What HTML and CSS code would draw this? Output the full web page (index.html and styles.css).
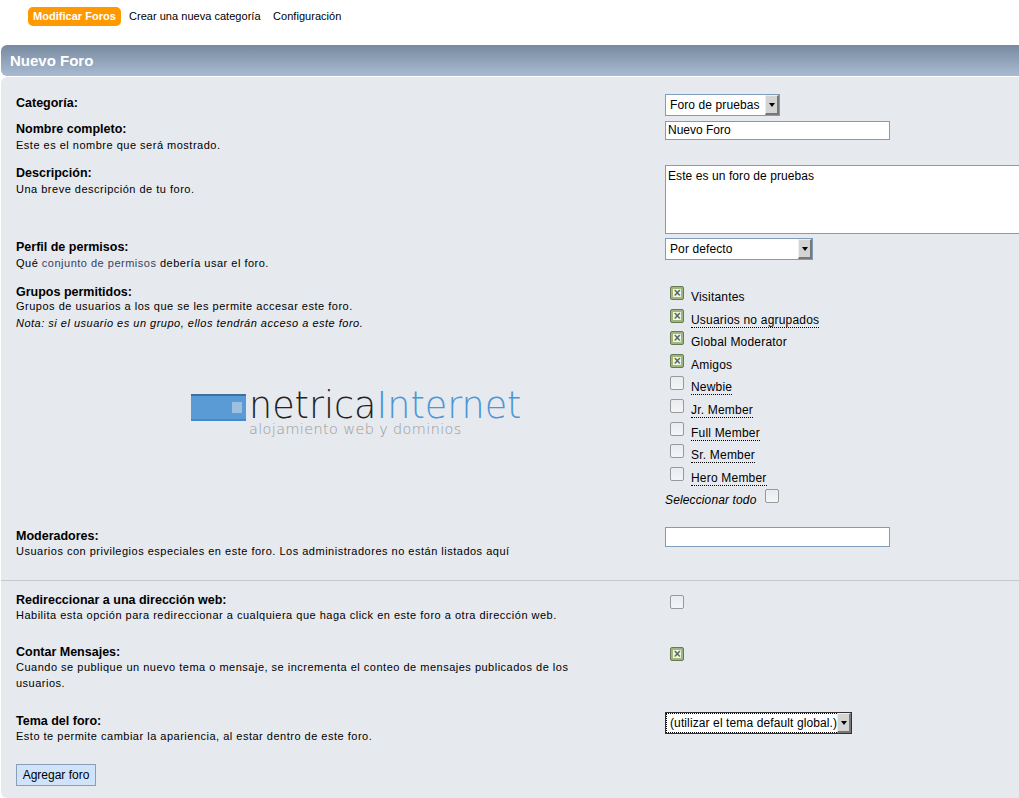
FILE: index.html
```html
<!DOCTYPE html>
<html lang="es">
<head>
<meta charset="utf-8">
<title>Nuevo Foro</title>
<link rel="stylesheet" href="styles.css">
</head>
<body>
<nav class="tabs">
  <a class="tab active">Modificar Foros</a>
  <a class="tab">Crear una nueva categoría</a>
  <a class="tab">Configuración</a>
</nav>
<h1 class="title">Nuevo Foro</h1>
<main class="panel">
  <section class="row r1">
    <div class="info"><h2>Categoría:</h2></div>
    <div class="field up1"><div class="select w115"><span>Foro de pruebas</span><i class="arrow"></i></div></div>
  </section>
  <section class="row r2">
    <div class="info"><h2>Nombre completo:</h2><p>Este es el nombre que será mostrado.</p></div>
    <div class="field down1"><input class="text" type="text" value="Nuevo Foro"></div>
  </section>
  <section class="row r3">
    <div class="info"><h2>Descripción:</h2><p>Una breve descripción de tu foro.</p></div>
    <div class="field"><textarea class="area">Este es un foro de pruebas</textarea></div>
  </section>
  <section class="row r4">
    <div class="info"><h2>Perfil de permisos:</h2><p>Qué <a class="link">conjunto de permisos</a> debería usar el foro.</p></div>
    <div class="field up1"><div class="select w148"><span>Por defecto</span><i class="arrow"></i></div></div>
  </section>
  <section class="row r5">
    <div class="info">
      <h2>Grupos permitidos:</h2>
      <p>Grupos de usuarios a los que se les permite accesar este foro.</p>
      <p class="note">Nota: si el usuario es un grupo, ellos tendrán acceso a este foro.</p>
      <div class="logo">
        <div class="mark"><i></i></div>
        <div class="brand">
          <div class="name">netrica<span>Internet</span></div>
          <div class="tag">alojamiento web y dominios</div>
        </div>
      </div>
    </div>
    <div class="field down3">
      <ul class="groups">
        <li><i class="check on"></i><span>Visitantes</span></li>
        <li><i class="check on"></i><span class="dotted">Usuarios no agrupados</span></li>
        <li><i class="check on"></i><span>Global Moderator</span></li>
        <li><i class="check on"></i><span>Amigos</span></li>
        <li><i class="check"></i><span class="dotted">Newbie</span></li>
        <li><i class="check"></i><span class="dotted">Jr. Member</span></li>
        <li><i class="check"></i><span class="dotted">Full Member</span></li>
        <li><i class="check"></i><span class="dotted">Sr. Member</span></li>
        <li><i class="check"></i><span class="dotted">Hero Member</span></li>
      </ul>
      <div class="all"><em>Seleccionar todo</em><i class="check"></i></div>
    </div>
  </section>
  <section class="row r6">
    <div class="info"><h2>Moderadores:</h2><p>Usuarios con privilegios especiales en este foro. Los administradores no están listados aquí</p></div>
    <div class="field up1"><input class="text tall" type="text"></div>
  </section>
  <hr class="rule">
  <section class="row r7">
    <div class="info"><h2>Redireccionar a una dirección web:</h2><p>Habilita esta opción para redireccionar a cualquiera que haga click en este foro a otra dirección web.</p></div>
    <div class="field down4 pad5"><i class="check"></i></div>
  </section>
  <section class="row r8">
    <div class="info"><h2>Contar Mensajes:</h2><p>Cuando se publique un nuevo tema o mensaje, se incrementa el conteo de mensajes publicados de los usuarios.</p></div>
    <div class="field down4 pad5"><i class="check on"></i></div>
  </section>
  <section class="row r9">
    <div class="info"><h2>Tema del foro:</h2><p>Esto te permite cambiar la apariencia, al estar dentro de este foro.</p></div>
    <div class="field"><div class="select w187 focus"><span>(utilizar el tema default global.)</span><i class="arrow"></i></div></div>
  </section>
  <button class="submit" type="button">Agregar foro</button>
</main>
</body>
</html>
```
FILE: styles.css
```css
* { box-sizing: border-box; }
html, body { margin: 0; padding: 0; }
body {
  width: 1019px;
  height: 798px;
  overflow: hidden;
  background: #fff;
  font-family: "Liberation Sans", Arial, sans-serif;
  font-size: 12px;
  color: #000;
}
.tabs {
  display: flex;
  align-items: center;
  height: 45px;
  padding: 7px 0 19px 28px;
}
.tab {
  font-size: 11px;
  line-height: 19px;
  color: #000;
  margin-right: 12.5px;
  letter-spacing: 0.03px;
}
.tab.active {
  background: #ff9900;
  color: #fff;
  font-weight: bold;
  padding: 0 5px;
  border-radius: 5px;
  margin-right: 8px;
}
.title {
  margin: 0 0 1px 1px;
  height: 31px;
  padding-left: 9px;
  font-size: 15px;
  line-height: 31px;
  font-weight: bold;
  color: #fff;
  background: linear-gradient(#778a9f, #a8bbd2);
  border-radius: 6px 0 0 6px;
}
.panel {
  margin-left: 1px;
  height: 721px;
  padding: 18px 0 0 15px;
  background: #e6e9ee;
  border-radius: 6px 0 0 6px;
}
.row { display: flex; align-items: flex-start; }
.r1 { height: 25px; }
.r2 { height: 45px; }
.r3 { height: 74px; }
.r4 { height: 44px; }
.r5 { height: 245px; }
.r6 { height: 52px; }
.r7 { height: 52px; }
.r8 { height: 69px; }
.r9 { height: 52px; }
.info { width: 649px; flex: none; }
.info h2 {
  margin: 0;
  font-size: 12.5px;
  line-height: 16px;
  font-weight: bold;
}
.r2 .info, .r5 .info, .r7 .info, .r8 .info, .r9 .info { padding-top: 1px; }
.r6 h2, .r7 h2, .r8 h2, .r9 h2 { margin-bottom: -1px; }
.r5 h2 { margin-bottom: -2px; }
.info p {
  margin: 0;
  width: 590px;
  font-size: 11px;
  line-height: 16px;
  letter-spacing: 0.5px;
}
.info p.note { font-style: italic; margin-top: 1px; }
.link { color: #346; }
.field { flex: none; width: 354px; }
.up1 { margin-top: -1px; }
.down1 { margin-top: 1px; }
.down3 { margin-top: 3px; }
.down4 { margin-top: 4px; }
.pad5 { padding-left: 5px; }
.select {
  display: flex;
  align-items: center;
  justify-content: space-between;
  height: 22px;
  background: #fff;
  border: 1px solid #7f9db9;
  padding: 0 0 0 4px;
  font-size: 12px;
  letter-spacing: 0.11px;
  white-space: nowrap;
}
.w115 { width: 115px; }
.w148 { width: 148px; }
.w187 { width: 187px; }
.select.focus {
  border-color: #333;
  outline: 1px dotted #000;
  outline-offset: -2px;
}
.arrow {
  position: relative;
  flex: none;
  width: 14px;
  height: 20px;
  background: #d4d4d4;
  border-top: 1px solid #eee;
  border-left: 1px solid #eee;
  border-right: 2px solid #777;
  border-bottom: 2px solid #777;
}
.arrow::after {
  content: "";
  position: absolute;
  left: 3px;
  top: 7px;
  border-left: 3px solid transparent;
  border-right: 3px solid transparent;
  border-top: 4px solid #000;
}
.text, .area {
  display: block;
  margin: 0;
  background: #fff;
  border: 1px solid #7f9db9;
  border-radius: 0;
  outline: none;
  color: #000;
  font-family: "Liberation Sans", Arial, sans-serif;
  font-size: 12px;
}
.text { width: 225px; height: 19px; padding: 0 2px 2px; }
.text.tall { height: 20px; }
.area {
  width: 360px;
  height: 69px;
  padding: 3px 2px;
  line-height: 14px;
  letter-spacing: 0.08px;
  resize: none;
  overflow: hidden;
}
.groups { margin: 0; padding: 0; list-style: none; }
.groups li {
  display: flex;
  align-items: flex-start;
  height: 22.6px;
  padding-left: 5px;
}
.groups span { margin: 4px 0 0 7px; line-height: 14px; font-size: 12px; letter-spacing: 0.2px; }
.dotted { border-bottom: 1px dotted #000; }
.check {
  display: block;
  flex: none;
  position: relative;
  width: 14px;
  height: 14px;
  border: 1px solid #999;
  border-radius: 2px;
  background: linear-gradient(#e9ebee, #f4f5f7);
}
.check.on {
  border-color: #667a55;
  background: #9db77f;
}
.check.on::after {
  content: "×";
  position: absolute;
  left: 2px;
  top: 2px;
  width: 8px;
  height: 8px;
  background: #f2f4ee;
  color: #56694a;
  font-size: 12px;
  font-weight: bold;
  line-height: 8px;
  text-align: center;
}
.all {
  display: flex;
  align-items: flex-start;
  height: 18px;
}
.all em { font-size: 12px; margin: 4px 9px 0 0; line-height: 14px; letter-spacing: 0.13px; }
.logo {
  display: flex;
  align-items: flex-start;
  margin: 62px 0 0 175px;
  width: 345px;
}
.mark {
  position: relative;
  flex: none;
  width: 55px;
  height: 27px;
  margin-top: 1px;
  background: #5b9bd5;
  border-top: 2px solid #3f6f9f;
  border-bottom: 2px solid #3f8ccc;
}
.mark i {
  position: absolute;
  right: 4px;
  top: 6px;
  width: 10px;
  height: 11px;
  background: #9dbfe0;
}
.brand { margin-left: 3px; }
.name {
  font-family: "DejaVu Sans", sans-serif;
  font-weight: 200;
  font-size: 36.5px;
  line-height: 26px;
  color: #222;
  white-space: nowrap;
}
.name span { color: #4a97d8; }
.tag {
  font-family: "DejaVu Sans", sans-serif;
  font-weight: 200;
  font-size: 14.4px;
  line-height: 16px;
  letter-spacing: 0.4px;
  color: #999;
  white-space: nowrap;
  margin-top: 2px;
}
.rule {
  margin: 0 0 10px -15px;
  border: 0;
  height: 1px;
  background: #c4c8cc;
}
.submit {
  display: block;
  width: 80px;
  height: 22px;
  margin: 0;
  padding: 0;
  background: #cfe3fb;
  border: 1px solid #8a9fb5;
  font-family: "Liberation Sans", Arial, sans-serif;
  font-size: 12px;
  color: #000;
}
```
